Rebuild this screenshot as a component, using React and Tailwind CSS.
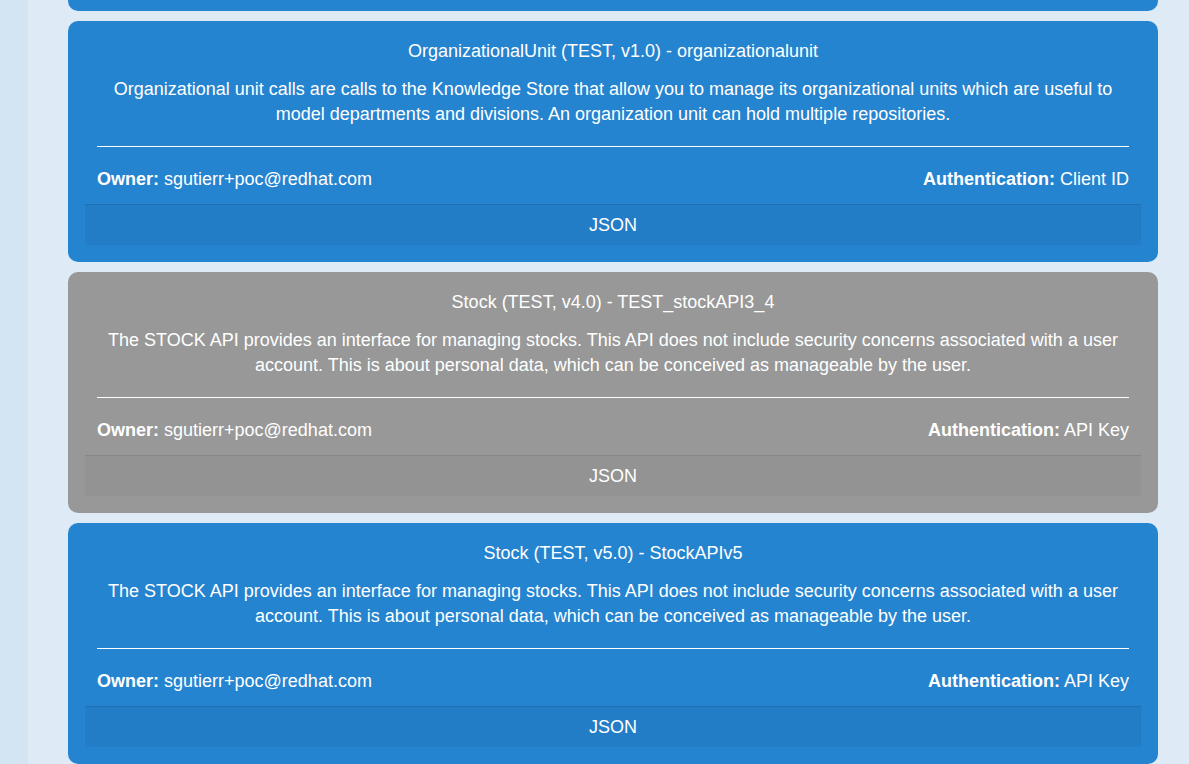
const apis = [
  {
    title: 'OrganizationalUnit (TEST, v1.0) - organizationalunit',
    description:
      'Organizational unit calls are calls to the Knowledge Store that allow you to manage its organizational units which are useful to model departments and divisions. An organization unit can hold multiple repositories.',
    owner: 'sgutierr+poc@redhat.com',
    auth: 'Client ID',
    tone: 'blue',
  },
  {
    title: 'Stock (TEST, v4.0) - TEST_stockAPI3_4',
    description:
      'The STOCK API provides an interface for managing stocks. This API does not include security concerns associated with a user account. This is about personal data, which can be conceived as manageable by the user.',
    owner: 'sgutierr+poc@redhat.com',
    auth: 'API Key',
    tone: 'gray',
  },
  {
    title: 'Stock (TEST, v5.0) - StockAPIv5',
    description:
      'The STOCK API provides an interface for managing stocks. This API does not include security concerns associated with a user account. This is about personal data, which can be conceived as manageable by the user.',
    owner: 'sgutierr+poc@redhat.com',
    auth: 'API Key',
    tone: 'blue',
  },
]

export default function App() {
  return (
    <div
      className="flex h-[764px] w-[1189px] overflow-hidden bg-[#deeaf6] text-white"
      style={{ fontFamily: '"Liberation Sans", Arial, sans-serif' }}
    >
      <div className="w-[28px] shrink-0 bg-[#d3e4f3]" />
      <div className="flex w-[1090px] shrink-0 flex-col gap-[10px] pl-[40px] box-content">
        {/* bottom edge of the card scrolled above */}
        <div className="h-[11px] shrink-0 rounded-b-[10px] bg-[#2584cf]" />
        {apis.map((api, i) => (
          <ApiCard key={i} api={api} />
        ))}
      </div>
    </div>
  )
}

function ApiCard({ api }) {
  const gray = api.tone === 'gray'
  return (
    <div
      className={`flex h-[241px] shrink-0 flex-col rounded-[10px] px-[17px] pt-[18px] ${
        gray ? 'bg-[#979897]' : 'bg-[#2584cf]'
      }`}
    >
      <div className="px-3 text-center text-[18px] leading-[25px]">
        <p>{api.title}</p>
        <p className="mt-[13px]">{api.description}</p>
      </div>
      <div className="mx-3 mt-[19px] h-px bg-white" />
      <div className="mt-[20px] flex justify-between px-3 text-[18px] leading-[25px]">
        <span>
          <b>Owner:</b> {api.owner}
        </span>
        <span>
          <b>Authentication:</b> {api.auth}
        </span>
      </div>
      <div
        className={`mt-[12px] flex h-[41px] items-center justify-center border-t text-[18px] ${
          gray ? 'border-[#858685] bg-[#929392]' : 'border-[#1f70b2] bg-[#237dc6]'
        }`}
      >
        JSON
      </div>
    </div>
  )
}
